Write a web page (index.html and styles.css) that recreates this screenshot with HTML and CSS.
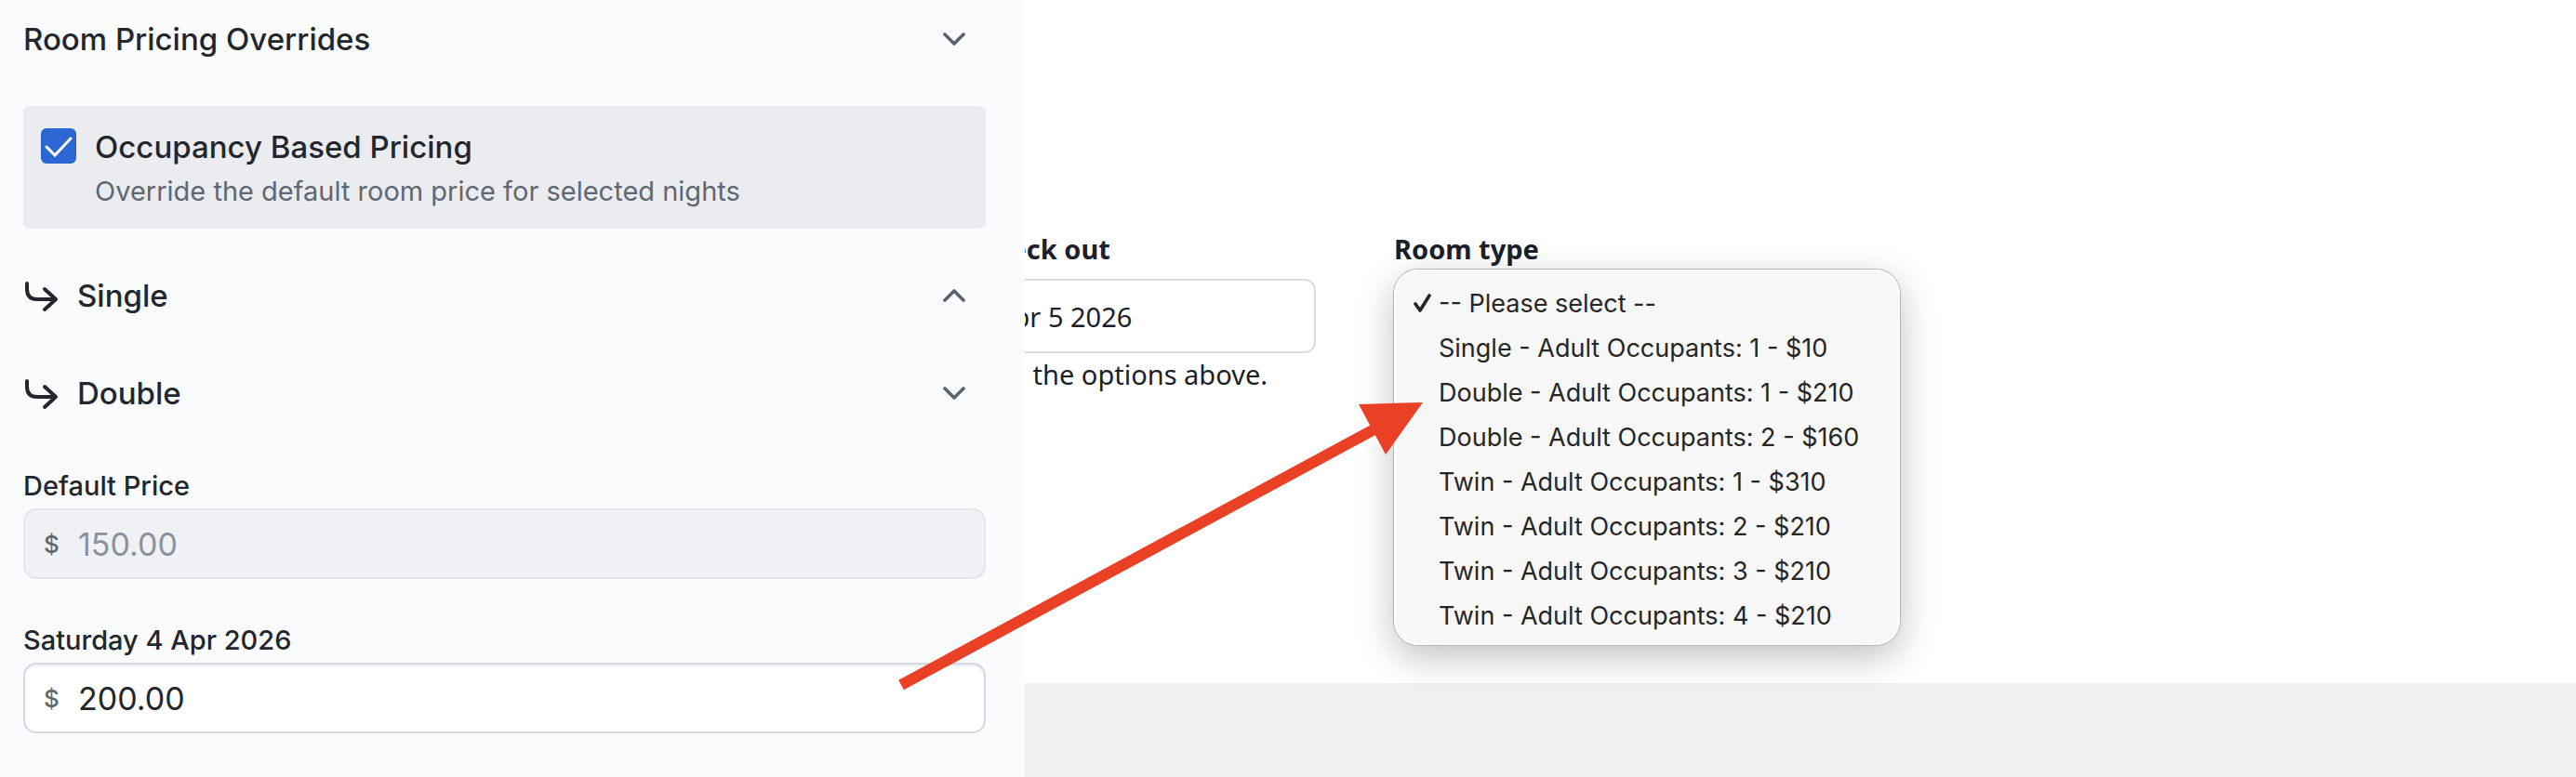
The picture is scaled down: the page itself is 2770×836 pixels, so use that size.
FILE: index.html
```
<!DOCTYPE html>
<html lang="en">
<head>
  <meta charset="UTF-8" />
  <meta name="viewport" content="width=device-width, initial-scale=1.0" />
  <title>Room Pricing Overrides</title>
  <link rel="stylesheet" href="styles.css">
</head>
<body>
  <aside class="sidebar">
    <button type="button" class="section-toggle" aria-expanded="true">
      <span class="toggle-title">Room Pricing Overrides</span>
      <svg class="chevron" viewBox="0 0 28 28"><path d="M4 9l10 10L24 9" /></svg>
    </button>

    <div class="option-card">
      <input type="checkbox" id="occupancy" class="checkbox" checked />
      <div class="option-text">
        <label for="occupancy" class="option-label">Occupancy Based Pricing</label>
        <p class="option-help">Override the default room price for selected nights</p>
      </div>
    </div>

    <button type="button" class="section-toggle room-toggle" aria-expanded="false">
      <svg class="sub-arrow" viewBox="0 0 38 38"><path d="M4 6v6q0 11 11 11h20M23 12l12 11l-12 11" /></svg>
      <span class="toggle-title">Single</span>
      <svg class="chevron" viewBox="0 0 28 28"><path d="M4 19L14 9l10 10" /></svg>
    </button>

    <button type="button" class="section-toggle room-toggle" aria-expanded="true">
      <svg class="sub-arrow" viewBox="0 0 38 38"><path d="M4 6v6q0 11 11 11h20M23 12l12 11l-12 11" /></svg>
      <span class="toggle-title">Double</span>
      <svg class="chevron" viewBox="0 0 28 28"><path d="M4 9l10 10L24 9" /></svg>
    </button>

    <div class="price-field">
      <label for="default-price">Default Price</label>
      <div class="price-box price-box-disabled">
        <span class="currency">$</span>
        <input type="text" id="default-price" class="price-input" value="150.00" disabled />
      </div>
    </div>

    <div class="price-field">
      <label for="saturday-price">Saturday 4 Apr 2026</label>
      <div class="price-box">
        <span class="currency">$</span>
        <input type="text" id="saturday-price" class="price-input" value="200.00" />
      </div>
    </div>
  </aside>

  <main class="main">
    <form class="booking">
      <div class="field">
        <label for="check-out">Check out</label>
        <input type="text" id="check-out" class="date-input" value="Apr 5 2026" />
        <p class="hint">from the options above.</p>
      </div>

      <div class="field room-field">
        <label for="room-type">Room type</label>
        <select id="room-type" class="room-select">
          <option>-- Please select --</option>
        </select>
        <ul class="menu" role="listbox" aria-label="Room type">
          <li role="option" aria-selected="true">
            <svg class="tick" viewBox="0 0 22 22"><path d="M3 12l5 7L18 3" /></svg>
            -- Please select --
          </li>
          <li role="option">Single - Adult Occupants: 1 - $10</li>
          <li role="option">Double - Adult Occupants: 1 - $210</li>
          <li role="option">Double - Adult Occupants: 2 - $160</li>
          <li role="option">Twin - Adult Occupants: 1 - $310</li>
          <li role="option">Twin - Adult Occupants: 2 - $210</li>
          <li role="option">Twin - Adult Occupants: 3 - $210</li>
          <li role="option">Twin - Adult Occupants: 4 - $210</li>
        </ul>
      </div>
    </form>
    <footer class="footer"></footer>
  </main>

  <!-- Arrow from the Saturday price to the matching option -->
  <svg class="pointer" viewBox="0 0 580 330">
    <path class="pointer-line" d="M14 317L530 38" />
    <path class="pointer-head" d="M575 13L506 15L535 69z" />
  </svg>
</body>
</html>
```
FILE: styles.css
```
* {
  box-sizing: border-box;
}

body {
  margin: 0;
  min-height: 100vh;
  display: flex;
  position: relative;
  background-color: #ffffff;
  font-family: Inter, "Liberation Sans", sans-serif;
  color: #23262d;
}

p {
  margin: 0;
}

/* Pricing sidebar */
.sidebar {
  flex: none;
  width: 1102px;
  padding: 22px 42px 40px 25px;
  background-color: #fafbfd;
}

.section-toggle {
  display: flex;
  align-items: center;
  width: 100%;
  height: 40px;
  padding: 0 20px 0 0;
  border: none;
  background: none;
  color: inherit;
  font-family: inherit;
  font-size: 33px;
  font-weight: 500;
  line-height: 40px;
  cursor: pointer;
}

.toggle-title {
  flex: 1;
  text-align: left;
}

.chevron {
  width: 28px;
  height: 28px;
  fill: none;
  stroke: #5b636e;
  stroke-width: 3.6;
  stroke-linecap: round;
  stroke-linejoin: round;
}

.option-card {
  display: flex;
  gap: 20px;
  margin: 52px 0;
  padding: 24px 19px 20px;
  border-radius: 6px;
  background-color: #ebecf0;
}

.checkbox {
  appearance: none;
  flex: none;
  width: 38px;
  height: 38px;
  margin: 0;
  border-radius: 6px;
  background: #2c66d2 url("data:image/svg+xml,%3Csvg xmlns='http://www.w3.org/2000/svg' viewBox='0 0 38 38'%3E%3Cpath d='M6 20l9 9L32 11' fill='none' stroke='white' stroke-width='3' stroke-linecap='round'/%3E%3C/svg%3E");
}

.option-label {
  display: block;
  font-size: 33px;
  font-weight: 500;
  line-height: 40px;
}

.option-help {
  margin-top: 8px;
  font-size: 29px;
  line-height: 40px;
  color: #5f6772;
}

.room-toggle {
  margin-bottom: 65px;
}

.room-toggle + .price-field {
  margin-top: -3px;
}

.sub-arrow {
  width: 38px;
  height: 38px;
  margin-right: 20px;
  fill: none;
  stroke: #23262d;
  stroke-width: 4;
  stroke-linecap: round;
  stroke-linejoin: round;
}

.price-field {
  margin-bottom: 48px;
}

.price-field:last-child {
  margin-bottom: 0;
}

.price-field label {
  display: block;
  margin-bottom: 6px;
  font-size: 29px;
  font-weight: 500;
  line-height: 36px;
}

.price-box {
  display: flex;
  align-items: center;
  height: 76px;
  padding: 0 20px;
  border: 2px solid #d4d9e1;
  border-radius: 14px;
  background-color: #ffffff;
  box-shadow: inset 0 2px 2px #eceef2;
}

.price-box-disabled {
  border-color: #e4e6ea;
  background-color: #f0f1f5;
  box-shadow: none;
}

.currency {
  width: 37px;
  font-size: 26px;
  font-weight: 500;
  color: #5f6772;
}

.price-input {
  flex: 1;
  min-width: 0;
  padding: 0;
  border: none;
  outline: none;
  background: none;
  color: #23262d;
  font-family: inherit;
  font-size: 34px;
}

.price-input:disabled {
  color: #8a929e;
}

/* Booking form */
.main {
  flex: 1;
  min-width: 0;
  display: flex;
  flex-direction: column;
  overflow: hidden;
  font-family: "Noto Sans", sans-serif;
  color: #1b202b;
}

.booking {
  display: flex;
  gap: 84px;
  margin-left: -53px;
  padding: 248px 0 312px;
}

.field {
  width: 366px;
  font-size: 29px;
  line-height: 40px;
}

.field label {
  display: block;
  margin-bottom: 12px;
  font-weight: 700;
}

.date-input,
.room-select {
  display: block;
  width: 100%;
  height: 80px;
  padding: 0 20px;
  border: 2px solid #dcdcdc;
  border-radius: 12px;
  background-color: #ffffff;
  color: inherit;
  font-family: inherit;
  font-size: 29px;
}

.hint {
  margin: 3px 0 0 -12px;
  white-space: nowrap;
}

.room-field {
  position: relative;
  width: 544px;
}

.room-select {
  appearance: none;
  border-color: #2f7fc4;
}

.menu {
  position: absolute;
  top: 42px;
  left: 0;
  width: 100%;
  margin: 0;
  padding: 13px 20px 7px 48px;
  border-radius: 26px;
  background-color: #f7f7f7;
  box-shadow: inset 0 0 0 2px #ffffff, 0 0 0 1px #b4b4b4, 0 12px 40px rgba(0, 0, 0, 0.26);
  list-style: none;
  font-family: Inter, "Liberation Sans", sans-serif;
  font-size: 27px;
  line-height: 48px;
  color: #262626;
  white-space: nowrap;
}

.menu li {
  position: relative;
}

.tick {
  position: absolute;
  top: 12px;
  left: -28px;
  width: 22px;
  height: 22px;
  fill: none;
  stroke: #262626;
  stroke-width: 3.6;
  stroke-linecap: round;
  stroke-linejoin: round;
}

.footer {
  flex: 1;
  min-height: 100px;
  background-color: #f1f1f1;
}

/* Annotation arrow */
.pointer {
  position: absolute;
  top: 420px;
  left: 955px;
  width: 580px;
  height: 330px;
  pointer-events: none;
}

.pointer-line {
  fill: none;
  stroke: #ea4126;
  stroke-width: 12;
}

.pointer-head {
  fill: #ea4126;
}
```
